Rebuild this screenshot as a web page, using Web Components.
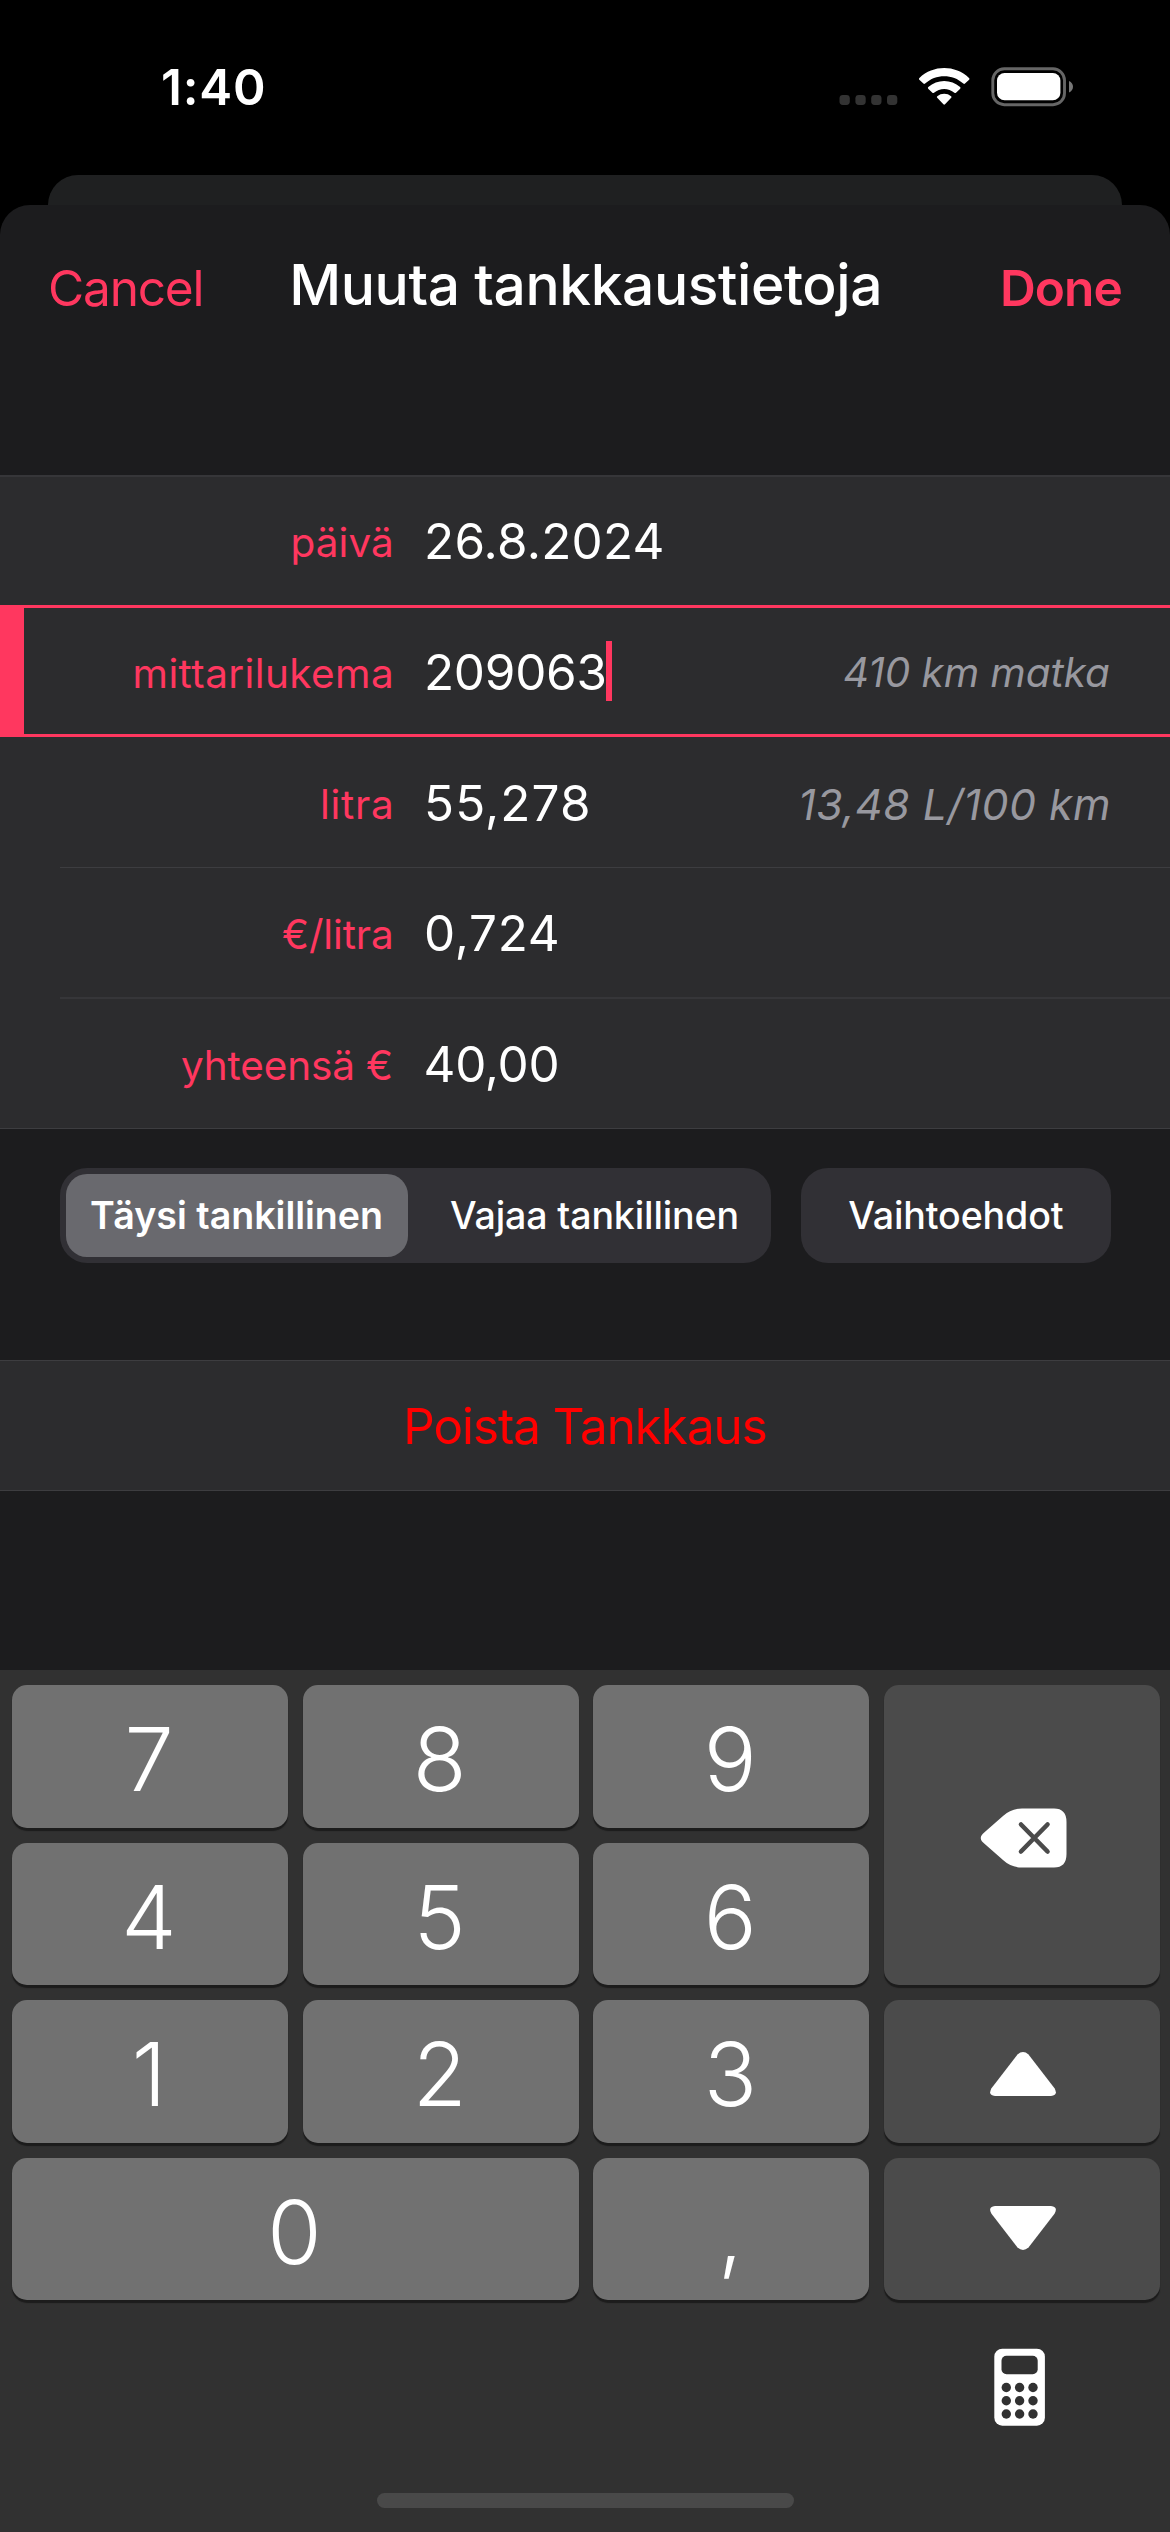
<!DOCTYPE html>
<html lang="fi">
<head>
<meta charset="utf-8">
<title>Muuta tankkaustietoja</title>
<style>
html, body { margin: 0; background: #000; }
body { width: 1170px; height: 2532px; overflow: hidden; font-family: Inter, "Liberation Sans", sans-serif; color: #fff; }
</style>
</head>
<body>
<fuel-app></fuel-app>

<script>
const define = (name, html, setup) => customElements.define(name, class extends HTMLElement {
  constructor() {
    super();
    this.attachShadow({ mode: 'open' });
  }
  connectedCallback() {
    if (this.shadowRoot.childNodes.length) return;
    const t = document.createElement('template');
    t.innerHTML = html;
    this.shadowRoot.append(t.content.cloneNode(true));
    if (setup) setup(this, this.shadowRoot);
  }
});

/* One line of text whose box is its ink: w is the ink width, reached with letter spacing. */
define('ink-text', `
  <style>:host{display:block;flex:none;white-space:nowrap;line-height:1.2;font-feature-settings:"calt" 0}</style><slot></slot>`,
  (el) => {
    const w = parseFloat(el.getAttribute('w'));
    const s = el.textContent;
    const ctx = document.createElement('canvas').getContext('2d');
    const cs = getComputedStyle(el);
    ctx.font = `${cs.fontStyle} ${cs.fontWeight} ${cs.fontSize} ${cs.fontFamily}`;
    const m = ctx.measureText(s);
    const ink = m.actualBoundingBoxLeft + m.actualBoundingBoxRight;
    if (s.length > 1) el.style.letterSpacing = ((w - ink) / (s.length - 1)).toFixed(3) + 'px';
    el.style.textIndent = m.actualBoundingBoxLeft.toFixed(2) + 'px';
    el.style.width = w + 'px';
  });

define('status-bar', `
  <style>
    :host{display:flex;height:175px;box-sizing:border-box;padding:57px 97px 0 163px;justify-content:space-between;align-items:flex-start}
    ink-text{font-size:49.4px;font-weight:600;line-height:60px}
    .right{display:flex;padding-top:10px}
    svg{display:block}
  </style>
  <ink-text w="101">1:40</ink-text>
  <div class="right">
    <svg width="234" height="40" viewBox="839 67 234 40">
      <g fill="#333">
        <rect x="839.5" y="95" width="10.3" height="10" rx="3.4"/><rect x="855.4" y="95" width="10.3" height="10" rx="3.4"/>
        <rect x="871.2" y="95" width="10.3" height="10" rx="3.4"/><rect x="887" y="95" width="10.3" height="10" rx="3.4"/>
      </g>
      <g fill="#fff">
        <path d="M919.3 79.7 Q918.5 78.8 919.4 77.9 C933.2 64.8 955.2 64.8 969 77.9 Q969.9 78.8 969.1 79.7 L965 83.6 Q964.2 84.3 963.3 83.5 C952.8 73.7 935.6 73.7 925.1 83.5 Q924.2 84.3 923.4 83.6 Z"/>
        <path d="M928.2 88.7 Q927.5 87.9 928.3 87.1 C937.2 78.9 951.2 78.9 960.1 87.1 Q960.9 87.9 960.2 88.7 L956 92.7 Q955.2 93.4 954.4 92.7 C948.6 87.6 939.8 87.6 934 92.7 Q933.2 93.4 932.4 92.7 Z"/>
        <path d="M937.2 97.8 Q936.4 97 937.3 96.3 C941.2 93 947.2 93 951.1 96.3 Q952 97 951.2 97.8 L945 104.3 Q944.2 105.1 943.4 104.3 Z"/>
      </g>
      <rect x="992.8" y="68.8" width="71.7" height="35.9" rx="11.5" fill="none" stroke="#666" stroke-width="2.9"/>
      <rect x="997" y="73" width="63.4" height="27.3" rx="7.6" fill="#fff"/>
      <path d="M1069 81 Q1073 83 1073 86.8 Q1073 90.6 1069 92.6 Z" fill="#777"/>
    </svg>
  </div>`);

define('nav-bar', `
  <style>
    :host{display:flex;height:270px;box-sizing:border-box;padding:0 48.5px 0 50px;justify-content:space-between;align-items:flex-start}
    ink-text{font-size:49.6px;line-height:60px;margin-top:53px;color:#ff375f}
    .title{font-size:56.9px;color:#fff;font-weight:500;margin:50px 0 0 -32px}
    .done{font-weight:600}
  </style>
  <ink-text w="151.5">Cancel</ink-text>
  <ink-text class="title" w="586">Muuta tankkaustietoja</ink-text>
  <ink-text class="done" w="118.5">Done</ink-text>`);

define('form-row', `
  <style>
    :host{display:grid;grid-template-columns:391px 1fr auto;align-items:center;height:130px;box-sizing:border-box;padding-right:61px;background:#2c2c2e no-repeat 60px 0/100% 1px}
    :host([tall]){height:132px}
    :host([sep]){background-image:linear-gradient(#3d3d40,#3d3d40)}
    :host([sep="soft"]){background-image:linear-gradient(#363639,#363639);background-size:100% 2px}
    :host([sep="top"]){background-image:linear-gradient(#363639,#363639);background-position:0 0;background-size:100% 2px}
    :host([active]){height:132px;border:solid #ff375f;border-width:3px 0 3px 24px;grid-template-columns:367px 1fr auto}
    .label{display:flex;justify-content:flex-end;font-size:40.5px;color:#ff375f;padding-top:7px}
    .value{display:flex;align-items:center;font-size:49.4px;padding:4px 0 0 36px}
    .note{font-size:40.5px;font-style:italic;color:#98989f;padding-top:5px}
  </style>
  <div class="label"><slot name="label"></slot></div>
  <div class="value"><slot></slot></div>
  <div class="note"><slot name="note"></slot></div>`);

define('text-caret', `<style>:host{display:block;width:6px;height:60px;margin:-4px 0 0 2px;background:#ff375f}</style>`);

define('fill-options', `
  <style>
    :host{display:flex;gap:30px;padding:39px 59px 97px 60px;font-size:37.6px;font-weight:500}
    .seg,.btn{display:flex;height:95px;box-sizing:border-box;background:#313035;border-radius:27px;align-items:center}
    .seg{width:711px;padding:6px}
    .seg>div{flex:1;display:flex;height:83px;align-items:center;justify-content:center;border-radius:21px}
    .seg>.on{flex:0 0 342px;background:#69696e;font-weight:600}
    .on ink-text{margin-left:-2px}
    .seg .off{justify-content:flex-start;padding-left:42px}
    .btn{width:310px;justify-content:center}
  </style>
  <div class="seg">
    <div class="on"><ink-text w="290">Täysi tankillinen</ink-text></div>
    <div class="off"><ink-text w="286.5">Vajaa tankillinen</ink-text></div>
  </div>
  <div class="btn"><ink-text w="215.5">Vaihtoehdot</ink-text></div>`);

define('delete-row', `
  <style>:host{display:flex;height:131px;box-sizing:border-box;border:solid #3d3d40;border-width:1px 0;background:#2c2c2e;align-items:center;justify-content:center;padding-top:3px;margin-bottom:179px;color:#f00;font-size:49.4px}
  ink-text{margin-left:3px}</style>
  <ink-text w="358.5">Poista Tankkaus</ink-text>`);

define('num-key', `
  <style>
    :host{display:flex;align-items:center;justify-content:center;border-radius:15px;background:#717171;box-shadow:0 3px 1px #1c1c1c;font-size:88px;font-weight:300;line-height:100px;padding:6px 2px 0 0;box-sizing:border-box}
    :host([dark]){background:#4b4b4b;padding:0}
    :host([tall]){grid-row:span 2}
    :host([wide]){grid-column:span 2}
  </style><slot></slot>`);

define('num-pad', `
  <style>
    :host{display:flex;flex-direction:column;height:862px;box-sizing:border-box;background:#313131;padding:15px 10px 24px 12px}
    .keys{display:grid;grid-template-columns:repeat(4,276px);grid-auto-rows:142.5px;gap:15px 14.67px}
    svg{display:block}
    .calc{align-self:flex-end;margin:48px 115px 0 0}
    .home{width:417px;height:15px;border-radius:8px;background:#494949;align-self:center;margin:auto 0 0 -1px}
  </style>
  <div class="keys">
    <num-key>7</num-key><num-key>8</num-key><num-key>9</num-key>
    <num-key dark tall><svg width="87" height="60" viewBox="0 0 87 60" style="margin:5px 0 0 4px">
      <path fill="#fff" d="M42 .5H74Q86.500 .5 86.500 14V46Q86.500 59.500 74 59.500H42Q31 59.500 23 52L4.500 35.800Q-3 30 4.500 24.200L23 8Q31 .5 42 .5Z"/>
      <path d="M41 16.500 67.500 43.500M67.500 16.500 41 43.500" stroke="#4b4b4b" stroke-width="4.600" stroke-linecap="round"/></svg></num-key>
    <num-key>4</num-key><num-key>5</num-key><num-key>6</num-key>
    <num-key>1</num-key><num-key>2</num-key><num-key>3</num-key>
    <num-key dark><svg width="66" height="44" viewBox="0 0 66 44" style="margin:6px 0 0 2px">
      <path fill="#fff" d="M27.500 2.400Q33-2.400 38.500 2.400L64.500 36.200Q68.500 43 61 44H5Q-2.500 43 1.500 36.200Z"/></svg></num-key>
    <num-key wide>0</num-key><num-key>,</num-key>
    <num-key dark><svg width="66" height="44" viewBox="0 0 66 44" style="margin:0 0 2px 2px">
      <path fill="#fff" d="M27.500 41.600Q33 46.400 38.500 41.600L64.500 7.800Q68.500 1 61 0H5Q-2.500 1 1.500 7.800Z"/></svg></num-key>
  </div>
  <svg class="calc" width="51" height="78" viewBox="0 0 51 78">
    <rect x=".3" y=".7" width="50.600" height="77" rx="8" fill="#fff"/>
    <g fill="#313131"><rect x="7.500" y="7.800" width="36.200" height="18.400" rx="5"/>
    <circle cx="12.300" cy="39.500" r="4.700"/><circle cx="25.600" cy="39.500" r="4.700"/><circle cx="39" cy="39.500" r="4.700"/>
    <circle cx="12.300" cy="52.700" r="4.700"/><circle cx="25.600" cy="52.700" r="4.700"/><circle cx="39" cy="52.700" r="4.700"/>
    <circle cx="12.300" cy="66" r="4.700"/><circle cx="25.600" cy="66" r="4.700"/><circle cx="39" cy="66" r="4.700"/></g>
  </svg>
  <div class="home"></div>`);

define('fuel-app', `
  <style>
    :host{display:flex;flex-direction:column;width:1170px;height:2532px;background:#000}
    .behind{height:30px;margin:0 48px;background:#1f2021;border-radius:30px 30px 0 0;flex:none}
    .sheet{height:1465px;flex:none;background:#1c1c1e;border-radius:30px 30px 0 0}
    status-bar,num-pad{flex:none}
    .wide{font-size:42.8px}
    .last{box-shadow:inset 0 -1px #3d3d40}
  </style>
  <status-bar></status-bar>
  <div class="behind"></div>
  <div class="sheet">
    <nav-bar></nav-bar>
    <div class="group">
      <form-row sep="top"><ink-text slot="label" w="97.5">päivä</ink-text><ink-text w="235.600">26.8.2024</ink-text></form-row>
      <form-row active><ink-text slot="label" w="255.500">mittarilukema</ink-text><ink-text w="177.400">209063</ink-text><text-caret></text-caret><ink-text slot="note" w="265">410 km matka</ink-text></form-row>
      <form-row><ink-text slot="label" w="68">litra</ink-text><ink-text w="161">55,278</ink-text><ink-text slot="note" class="wide" w="307.800">13,48 L/100 km</ink-text></form-row>
      <form-row sep><ink-text slot="label" w="108">€/litra</ink-text><ink-text style="margin-left:-1px" w="131.800">0,724</ink-text></form-row>
      <form-row class="last" tall sep="soft"><ink-text slot="label" w="209">yhteensä €</ink-text><ink-text style="margin-left:-1.500px" w="132">40,00</ink-text></form-row>
    </div>
    <fill-options></fill-options>
    <delete-row></delete-row>
  </div>
  <num-pad></num-pad>`);
</script>
</body>
</html>
